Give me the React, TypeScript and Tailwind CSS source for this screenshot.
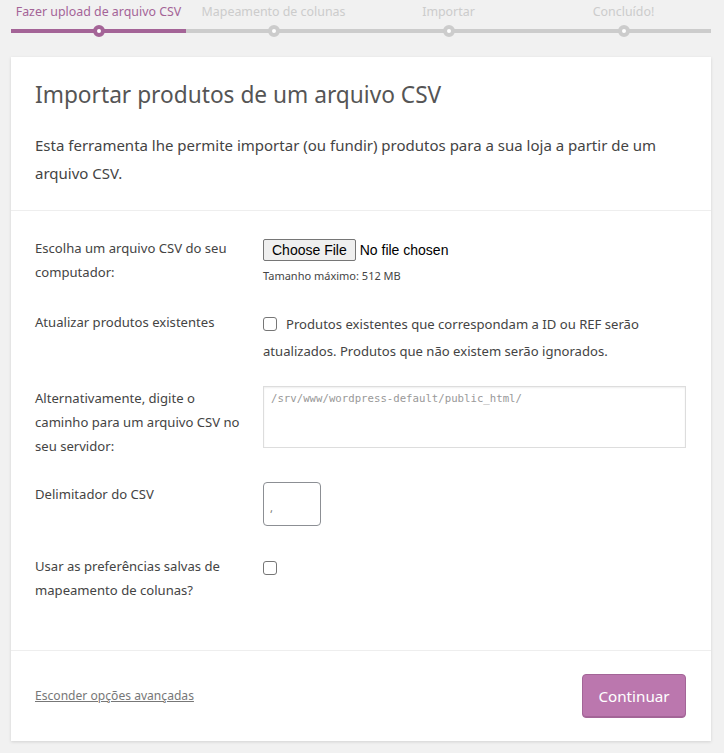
import { useState } from "react";

const steps = [
  "Fazer upload de arquivo CSV",
  "Mapeamento de colunas",
  "Importar",
  "Concluído!",
];

export default function App() {
  const [updateExisting, setUpdateExisting] = useState(false);
  const [useMapping, setUseMapping] = useState(false);

  return (
    <main
      className="min-h-[753px] bg-[#f1f1f1] pb-3 text-[#444]"
      style={{ fontFamily: '"Noto Sans", "Open Sans", sans-serif' }}
    >
      <div className="flex px-[11px] pt-[2px]">
        {steps.map((step, i) => (
          <div key={step} className="flex w-[175px] flex-col items-center">
            <span
              className={
                "h-[20px] text-[12.4px] leading-[20px] " +
                (i === 0 ? "text-[#a46497]" : "text-[#cccccc]")
              }
            >
              {step}
            </span>
            <div className="relative mt-[7px] h-[4px] w-full">
              <div
                className={
                  "h-full w-full " + (i === 0 ? "bg-[#a46497]" : "bg-[#cccccc]")
                }
              />
              <div
                className={
                  "absolute left-1/2 top-1/2 h-[12px] w-[12px] -translate-x-1/2 -translate-y-1/2 rounded-full border-[4px] bg-white " +
                  (i === 0 ? "border-[#a46497]" : "border-[#cccccc]")
                }
              />
            </div>
          </div>
        ))}
      </div>

      <div className="ml-[11px] mt-[24px] w-[700px] bg-white shadow-[0_1px_3px_rgba(0,0,0,0.13)]">
        <header className="border-b border-[#eee] pb-[23px] pl-[24px] pr-[25px] pt-[23px]">
          <h2 className="text-[22.7px] font-normal leading-[30px] text-[#555]">
            Importar produtos de um arquivo CSV
          </h2>
          <p className="mt-[21px] text-[15px] leading-[28px] text-[#444]">
            Esta ferramenta lhe permite importar (ou fundir) produtos para a sua loja a partir
            de um arquivo CSV.
          </p>
        </header>

        <section className="flex flex-col border-b border-[#eee] pb-[48px] pl-[24px] pr-[25px] pt-[25px] text-[13.1px] text-[#444]">
          <div className="flex">
            <label className="w-[228px] shrink-0 pr-[16px] leading-[24px]">
              Escolha um arquivo CSV do seu computador:
            </label>
            <div className="pt-[3px]">
              <div
                className="flex items-center text-[14px] text-black"
                style={{ fontFamily: '"Liberation Sans", Arial, sans-serif' }}
              >
                <span className="rounded-[2px] border border-[#767676] bg-[#efefef] px-[8px] leading-[20px]">
                  Choose File
                </span>
                <span className="ml-[4px]">No file chosen</span>
              </div>
              <p className="mt-[8px] text-[11px] leading-[14px] text-[#444]">
                Tamanho máximo: 512 MB
              </p>
            </div>
          </div>

          <div className="mt-[25px] flex">
            <label className="w-[228px] shrink-0 pr-[16px] leading-[27px]">
              Atualizar produtos existentes
            </label>
            <p className="flex-1 pt-[2px] leading-[27px]">
              <input
                type="checkbox"
                checked={updateExisting}
                onChange={(e) => setUpdateExisting(e.target.checked)}
                className="mr-[9px] inline-block h-[14px] w-[14px] appearance-none rounded-[3px] border border-[#767676] bg-white align-[-2px]"
              />
              Produtos existentes que correspondam a ID ou REF serão atualizados. Produtos que
              não existem serão ignorados.
            </p>
          </div>

          <div className="mt-[21px] flex">
            <label className="w-[228px] shrink-0 pr-[16px] leading-[24px]">
              Alternativamente, digite o caminho para um arquivo CSV no seu servidor:
            </label>
            <textarea
              readOnly
              value="/srv/www/wordpress-default/public_html/"
              className="h-[62px] flex-1 resize-none border border-[#ddd] px-[7px] py-[3px] text-[10.7px] leading-[18px] text-[#999] shadow-[inset_0_1px_2px_rgba(0,0,0,0.07)] outline-none"
              style={{ fontFamily: '"DejaVu Sans Mono", monospace' }}
            />
          </div>

          <div className="mt-[24px] flex">
            <label className="w-[228px] shrink-0 pr-[16px] leading-[24px]">
              Delimitador do CSV
            </label>
            <input
              readOnly
              value=","
              className="h-[44px] w-[58px] rounded-[4px] border border-[#8c8f94] px-[6px] pt-[6px] text-[11px] text-[#777] outline-none"
            />
          </div>

          <div className="mt-[28px] flex">
            <label className="w-[228px] shrink-0 pr-[16px] leading-[24px]">
              Usar as preferências salvas de mapeamento de colunas?
            </label>
            <div className="pt-[7px]">
              <input
                type="checkbox"
                checked={useMapping}
                onChange={(e) => setUseMapping(e.target.checked)}
                className="block h-[14px] w-[14px] appearance-none rounded-[3px] border border-[#767676] bg-white"
              />
            </div>
          </div>
        </section>

        <footer className="flex items-center justify-between py-[23px] pl-[24px] pr-[25px]">
          <a href="#" className="text-[12.1px] text-[#777] underline">
            Esconder opções avançadas
          </a>
          <button className="h-[44px] w-[104px] rounded-[4px] border border-[#a36597] bg-[#bb77ae] text-[15.2px] text-white shadow-[inset_0_-1px_0_#a36597]">
            Continuar
          </button>
        </footer>
      </div>
    </main>
  );
}
